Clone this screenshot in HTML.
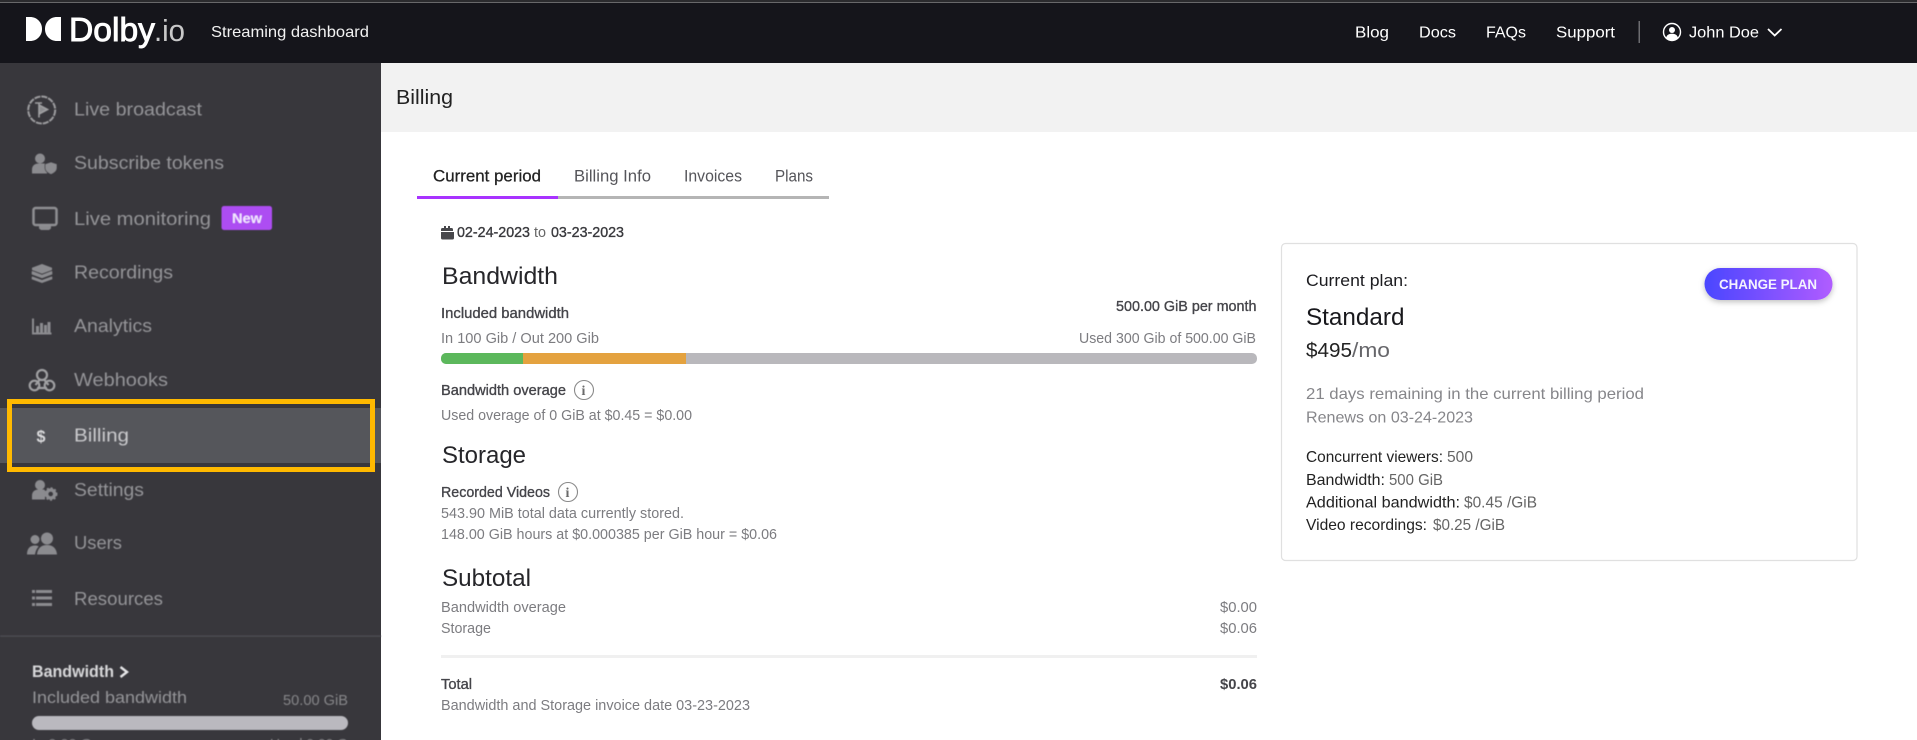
<!DOCTYPE html>
<html lang="en">
<head>
<meta charset="utf-8">
<title>Billing - Streaming dashboard</title>
<style>
html,body{margin:0;padding:0;width:1917px;height:740px;overflow:hidden;background:#fff}
svg{display:block;font-family:"Liberation Sans",sans-serif}
.side{fill:#949498;font-size:18.5px}
.ic{fill:#8b8b8f}
.t{font-size:15px;fill:#7c7c80}
.s{font-size:15px;fill:#45454a;stroke:#45454a;stroke-width:.35px}
.h{font-size:24px;fill:#26262a}
.k{font-size:16px;fill:#222}
.v{font-size:16px;fill:#666}
.n{font-size:15.5px;fill:#fff}
.tab{font-size:16.5px;fill:#55555a}
</style>
</head>
<body>
<svg width="1917" height="740" viewBox="0 0 1917 740" xmlns="http://www.w3.org/2000/svg">
<defs>
<linearGradient id="btn" x1="0" x2="1" y1="0" y2="0"><stop offset="0" stop-color="#4a46ff"/><stop offset="1" stop-color="#b05cff"/></linearGradient>
<filter id="sh" x="-20%" y="-40%" width="140%" height="190%"><feDropShadow dx="0" dy="2" stdDeviation="3" flood-color="#000" flood-opacity=".25"/></filter>
<filter id="soft"><feGaussianBlur stdDeviation=".45"/></filter>
</defs>

<!-- top bar -->
<rect width="1917" height="63" fill="#15151b"/>
<rect width="1917" height="2" fill="#2b2b2e"/>
<rect y="2" width="1917" height="1" fill="#68686a"/>
<path d="M26 17h4c7 0 12 5.300 12 12s-5 12-12 12h-4z" fill="#fff"/>
<path d="M61 17h-4c-7 0-12 5.300-12 12s5 12 12 12h4z" fill="#fff"/>
<text x="69" y="41" font-size="33" fill="#fff" stroke="#fff" stroke-width=".9" textLength="86" lengthAdjust="spacingAndGlyphs">Dolby</text>
<text x="154" y="41" font-size="31" fill="#e8e8e8" textLength="31" lengthAdjust="spacingAndGlyphs" opacity=".85">.io</text>
<text x="211" y="37" font-size="16" fill="#f2f2f2" textLength="158" lengthAdjust="spacingAndGlyphs">Streaming dashboard</text>
<text class="n" x="1355" y="37.500" textLength="34" lengthAdjust="spacingAndGlyphs">Blog</text>
<text class="n" x="1419" y="37.500" textLength="37" lengthAdjust="spacingAndGlyphs">Docs</text>
<text class="n" x="1486" y="37.500" textLength="40" lengthAdjust="spacingAndGlyphs">FAQs</text>
<text class="n" x="1556" y="37.500" textLength="59" lengthAdjust="spacingAndGlyphs">Support</text>
<rect x="1638.500" y="21" width="1.500" height="22" fill="#6c6c70"/>
<circle cx="1672" cy="32" r="8.500" fill="none" stroke="#fff" stroke-width="1.400"/>
<circle cx="1672" cy="30" r="3" fill="#fff"/>
<path d="M1666 38c.8-3 2.800-4.200 6-4.200s5.200 1.200 6 4.200c-1.600 1.500-3.600 2.200-6 2.200s-4.400-.7-6-2.200z" fill="#fff"/>
<text class="n" x="1689" y="37.500" textLength="70" lengthAdjust="spacingAndGlyphs">John Doe</text>
<path d="M1768 29l6.700 6.500 6.800-6.500" fill="none" stroke="#fff" stroke-width="1.800"/>

<!-- sidebar -->
<rect y="63" width="381" height="677" fill="#38373c"/>
<rect y="408" width="381" height="55" fill="#55565b"/>
<g filter="url(#soft)">
<circle cx="41.700" cy="110" r="13.500" fill="none" stroke="#9c9c9f" stroke-width="2" stroke-dasharray="6 1"/>
<path d="M39 102.500v15M39 105l8.500 4.500-8.500 4.500z" fill="#8d8d90" stroke="#a0a0a3" stroke-width="1.600"/>
<path d="M35 103h7" stroke="#a0a0a3" stroke-width="1.500"/>
<text class="side" x="74" y="115.500" textLength="128" lengthAdjust="spacingAndGlyphs">Live broadcast</text>

<circle class="ic" cx="40" cy="158.500" r="5"/>
<path class="ic" d="M32 173.500v-4c0-4 3-6 6.500-6h5.500c1.500 0 3 .5 3 2v8z"/>
<path class="ic" d="M51 162l6 2v4c0 3-2.500 5-6 6.500-3.500-1.500-6-3.500-6-6.500v-4z" stroke="#38373c" stroke-width=".8"/>
<text class="side" x="74" y="169" textLength="150" lengthAdjust="spacingAndGlyphs">Subscribe tokens</text>

<rect x="33.500" y="208" width="23" height="17" rx="2" fill="none" stroke="#8f8f93" stroke-width="2.500"/>
<path class="ic" d="M39 226h12v2.500l-2 1.500h-8l-2-1.500z"/>
<text class="side" x="74" y="225" textLength="137" lengthAdjust="spacingAndGlyphs">Live monitoring</text>
<rect x="221.500" y="206" width="50.500" height="24" rx="2.500" fill="#ad4df2"/>
<text x="232" y="223" font-size="13.500" font-weight="bold" fill="#f4e8ff" textLength="30" lengthAdjust="spacingAndGlyphs">New</text>

<path class="ic" d="M42 264l10 3.700v2.300l-10 3.700-10-3.700v-2.300z"/>
<path class="ic" d="M32.500 271l9.500 3.700 9.500-3.700 .8 .4v3l-10.300 3.800-10.300-3.800v-3z"/>
<path class="ic" d="M32.500 276.500l9.500 3.500 9.500-3.500 .8 .4v2.300l-10.300 3.800-10.300-3.800v-2.300z"/>
<text class="side" x="74" y="278.500" textLength="99" lengthAdjust="spacingAndGlyphs">Recordings</text>

<path d="M33 318.500v15h18.500" fill="none" stroke="#8b8b8f" stroke-width="2"/>
<path class="ic" d="M36 326h3v6.500h-3zM40 323h3v9.500h-3zM44 325h3v7.500h-3zM47.500 322h3v10.500h-3z"/>
<text class="side" x="74" y="332" textLength="78" lengthAdjust="spacingAndGlyphs">Analytics</text>

<g fill="none" stroke="#a0a0a3" stroke-width="2.200">
<circle cx="42" cy="375" r="5"/>
<circle cx="34.500" cy="385.500" r="4.800"/>
<circle cx="49.500" cy="385.500" r="4.800"/>
<path d="M39.500 380l-4 5M44.500 380l4 5M37 388h10"/>
</g>
<text class="side" x="74" y="386" textLength="94" lengthAdjust="spacingAndGlyphs">Webhooks</text>

<text x="36.500" y="442" font-size="17" font-weight="bold" fill="#dcdcde" textLength="9" lengthAdjust="spacingAndGlyphs">$</text>
<text x="74" y="441.500" font-size="18.500" fill="#c9c9cc" textLength="55" lengthAdjust="spacingAndGlyphs">Billing</text>

<circle class="ic" cx="40" cy="485" r="5"/>
<path class="ic" d="M32 499.500v-4c0-4 3-6 6.500-6h5.500c.5 0 1 1 1 2v8z"/>
<circle cx="50.700" cy="494" r="4" fill="none" stroke="#8b8b8f" stroke-width="3.400"/>
<circle cx="50.700" cy="494" r="6" fill="none" stroke="#8b8b8f" stroke-width="1.500" stroke-dasharray="2 2"/>
<text class="side" x="74" y="496" textLength="70" lengthAdjust="spacingAndGlyphs">Settings</text>

<circle class="ic" cx="35" cy="539.500" r="4.500"/>
<circle class="ic" cx="47" cy="538.500" r="6"/>
<path class="ic" d="M27 554.500c0-6 3-9 8-9 1.500 0 2.700.3 3.700 1-2 2-3.200 4.700-3.700 8z"/>
<path class="ic" d="M37 554.500c.5-6 4-9.500 10-9.500s9.500 3.500 10 9.500z"/>
<text class="side" x="74" y="549" textLength="48" lengthAdjust="spacingAndGlyphs">Users</text>

<path class="ic" d="M32 590h3v3h-3zM36 590h16v3H36zM32 596.500h3v3h-3zM36 596.500h16v3H36zM32 603h3v3h-3zM36 603h16v3H36z"/>
<text class="side" x="74" y="605" textLength="89" lengthAdjust="spacingAndGlyphs">Resources</text>

<rect y="635.500" width="381" height="1.200" fill="#4f4f54"/>
<text x="32" y="677" font-size="16.500" font-weight="bold" fill="#d8d8da" textLength="82" lengthAdjust="spacingAndGlyphs">Bandwidth</text>
<path d="M120.500 667l6.500 5-6.500 5" fill="none" stroke="#e6e6e8" stroke-width="2.400"/>
<text x="32" y="703" font-size="16.500" fill="#949498" textLength="155" lengthAdjust="spacingAndGlyphs">Included bandwidth</text>
<text x="283" y="705" font-size="14.500" fill="#868689" textLength="65" lengthAdjust="spacingAndGlyphs">50.00 GiB</text>
<rect x="32" y="716" width="316" height="14" rx="7" fill="#bab9bf"/>
<text x="32" y="749" font-size="14.500" fill="#868689" textLength="60" lengthAdjust="spacingAndGlyphs">In 0.00 G</text>
<text x="270" y="749" font-size="14.500" fill="#868689" textLength="78" lengthAdjust="spacingAndGlyphs">Used 0.00 G</text>
</g>
<rect x="9.500" y="401.500" width="363" height="68" fill="none" stroke="#ffb900" stroke-width="5"/>

<!-- content header -->
<rect x="381" y="63" width="1536" height="69" fill="#f2f2f2"/>
<text x="396" y="104" font-size="20" fill="#222" textLength="57" lengthAdjust="spacingAndGlyphs">Billing</text>

<!-- tabs -->
<text class="tab" x="433" y="181.500" style="fill:#222;stroke:#222;stroke-width:.25px" textLength="108" lengthAdjust="spacingAndGlyphs">Current period</text>
<text class="tab" x="574" y="181.500" textLength="77" lengthAdjust="spacingAndGlyphs">Billing Info</text>
<text class="tab" x="684" y="181.500" textLength="58" lengthAdjust="spacingAndGlyphs">Invoices</text>
<text class="tab" x="775" y="181.500" textLength="38" lengthAdjust="spacingAndGlyphs">Plans</text>
<rect x="417" y="196" width="412" height="3" fill="#b5b5b5"/>
<rect x="417" y="196" width="141" height="3" fill="#a833ff"/>

<!-- date -->
<path fill="#47474b" d="M441 229.500a1.500 1.500 0 0 1 1.500-1.500H444v-2h2v2h2v-2h2v2h1.500a1.500 1.500 0 0 1 1.500 1.500v1.500H441zM441 232h13v6a1.500 1.500 0 0 1-1.500 1.500h-10a1.500 1.500 0 0 1-1.500-1.500z"/>
<text x="457" y="237" font-size="14.500" fill="#3a3a3e" stroke="#3a3a3e" stroke-width=".35" textLength="73" lengthAdjust="spacingAndGlyphs">02-24-2023</text>
<text x="534" y="237" font-size="14.500" fill="#666" textLength="12" lengthAdjust="spacingAndGlyphs">to</text>
<text x="551" y="237" font-size="14.500" fill="#3a3a3e" stroke="#3a3a3e" stroke-width=".35" textLength="73" lengthAdjust="spacingAndGlyphs">03-23-2023</text>

<!-- bandwidth -->
<text class="h" x="442" y="284" textLength="116" lengthAdjust="spacingAndGlyphs">Bandwidth</text>
<text class="s" x="441" y="318" textLength="128" lengthAdjust="spacingAndGlyphs">Included bandwidth</text>
<text class="s" x="1116" y="311" textLength="140.500" lengthAdjust="spacingAndGlyphs">500.00 GiB per month</text>
<text class="t" x="441" y="343" textLength="158" lengthAdjust="spacingAndGlyphs">In 100 Gib / Out 200 Gib</text>
<text class="t" x="1079" y="343" textLength="177" lengthAdjust="spacingAndGlyphs">Used 300 Gib of 500.00 GiB</text>
<rect x="441" y="353" width="816" height="11" rx="5" fill="#b9b8bc"/>
<path d="M446 353h77v11h-77a5 5 0 0 1-5-5v-1a5 5 0 0 1 5-5z" fill="#5cb85c"/>
<rect x="523" y="353" width="163" height="11" fill="#e4a23f"/>
<text class="s" x="441" y="395" textLength="125" lengthAdjust="spacingAndGlyphs">Bandwidth overage</text>
<circle cx="584" cy="390" r="9.500" fill="#fff" stroke="#8a8a8a" stroke-width="1.100"/>
<text x="581.500" y="395" font-size="14" font-family="Liberation Serif" font-weight="bold" fill="#6a6a6a">i</text>
<text class="t" x="441" y="420" textLength="251" lengthAdjust="spacingAndGlyphs">Used overage of 0 GiB at $0.45 = $0.00</text>

<!-- storage -->
<text class="h" x="442" y="463" textLength="84" lengthAdjust="spacingAndGlyphs">Storage</text>
<text class="s" x="441" y="497" textLength="109" lengthAdjust="spacingAndGlyphs">Recorded Videos</text>
<circle cx="568" cy="492" r="9.500" fill="#fff" stroke="#8a8a8a" stroke-width="1.100"/>
<text x="565.500" y="497" font-size="14" font-family="Liberation Serif" font-weight="bold" fill="#6a6a6a">i</text>
<text class="t" x="441" y="518" textLength="243" lengthAdjust="spacingAndGlyphs">543.90 MiB total data currently stored.</text>
<text class="t" x="441" y="539" textLength="336" lengthAdjust="spacingAndGlyphs">148.00 GiB hours at $0.000385 per GiB hour = $0.06</text>

<!-- subtotal -->
<text class="h" x="442" y="586" textLength="89" lengthAdjust="spacingAndGlyphs">Subtotal</text>
<text class="t" x="441" y="612" textLength="125" lengthAdjust="spacingAndGlyphs">Bandwidth overage</text>
<text class="t" x="441" y="633" textLength="50" lengthAdjust="spacingAndGlyphs">Storage</text>
<text class="t" x="1220" y="612" textLength="37" lengthAdjust="spacingAndGlyphs">$0.00</text>
<text class="t" x="1220" y="633" textLength="37" lengthAdjust="spacingAndGlyphs">$0.06</text>
<rect x="441" y="655" width="816" height="3" fill="#f0f0f0"/>
<text class="s" x="441" y="689" textLength="31" lengthAdjust="spacingAndGlyphs">Total</text>
<text x="1220" y="689" font-size="15" font-weight="bold" fill="#45454a" textLength="37" lengthAdjust="spacingAndGlyphs">$0.06</text>
<text class="t" x="441" y="710" textLength="309" lengthAdjust="spacingAndGlyphs">Bandwidth and Storage invoice date 03-23-2023</text>

<!-- plan card -->
<rect x="1281.500" y="243.500" width="575.500" height="317" rx="4" fill="#fff" stroke="#e0e0e0" stroke-width="1.200"/>
<text x="1306" y="286" font-size="16.500" fill="#1c1c20" textLength="102" lengthAdjust="spacingAndGlyphs">Current plan:</text>
<rect x="1704.500" y="268" width="128" height="32" rx="16" fill="url(#btn)" filter="url(#sh)"/>
<text x="1719" y="289" font-size="14" font-weight="bold" fill="#f4f2ff" textLength="98" lengthAdjust="spacingAndGlyphs">CHANGE PLAN</text>
<text x="1306" y="325" font-size="24.500" fill="#18181c" textLength="98.500" lengthAdjust="spacingAndGlyphs">Standard</text>
<text x="1306" y="357" font-size="20.500" fill="#222" textLength="46" lengthAdjust="spacingAndGlyphs">$495</text>
<text x="1352" y="357" font-size="20.500" fill="#66666a" textLength="38" lengthAdjust="spacingAndGlyphs">/mo</text>
<text x="1306" y="399" font-size="16" fill="#86868a" textLength="338" lengthAdjust="spacingAndGlyphs">21 days remaining in the current billing period</text>
<text x="1306" y="422.500" font-size="16" fill="#86868a" textLength="167" lengthAdjust="spacingAndGlyphs">Renews on 03-24-2023</text>
<text class="k" x="1306" y="462" textLength="137" lengthAdjust="spacingAndGlyphs">Concurrent viewers:</text>
<text class="v" x="1447" y="462" textLength="26" lengthAdjust="spacingAndGlyphs">500</text>
<text class="k" x="1306" y="485" textLength="79" lengthAdjust="spacingAndGlyphs">Bandwidth:</text>
<text class="v" x="1389" y="485" textLength="54" lengthAdjust="spacingAndGlyphs">500 GiB</text>
<text class="k" x="1306" y="507.500" textLength="154" lengthAdjust="spacingAndGlyphs">Additional bandwidth:</text>
<text class="v" x="1464" y="507.500" textLength="73" lengthAdjust="spacingAndGlyphs">$0.45 /GiB</text>
<text class="k" x="1306" y="530" textLength="121" lengthAdjust="spacingAndGlyphs">Video recordings:</text>
<text class="v" x="1433" y="530" textLength="72" lengthAdjust="spacingAndGlyphs">$0.25 /GiB</text>
</svg>
</body>
</html>
